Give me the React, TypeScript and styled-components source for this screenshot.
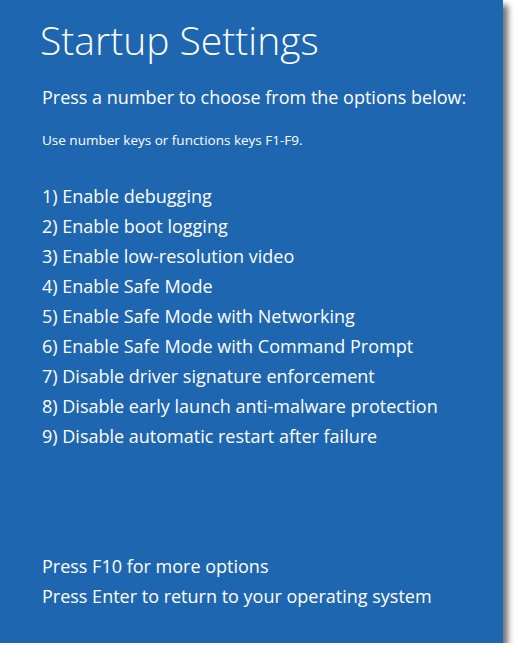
import React from "react";
import styled, { createGlobalStyle } from "styled-components";

const Global = createGlobalStyle`
  html, body { margin: 0; padding: 0; background: #ffffff; }
  body { font-family: "Open Sans", "Noto Sans", sans-serif; }
`;

const Screen = styled.div`
  width: 503px;
  height: 643px;
  background: #1f66b1;
  color: #ffffff;
  box-shadow: 5px 5px 6px rgba(0, 0, 0, 0.55);
  box-sizing: border-box;
  padding: 16px 0 0 40px;
  display: flex;
  flex-direction: column;
`;

const Title = styled.h1`
  margin: 0;
  font-weight: 300;
  font-size: 39px;
  line-height: 48px;
`;

const Prompt = styled.p`
  margin: 20px 0 0 2px;
  font-size: 18px;
  line-height: 26px;
  font-weight: 400;
`;

const Hint = styled.p`
  margin: 21px 0 0 2px;
  font-size: 13.5px;
  line-height: 18px;
`;

const OptionList = styled.ol`
  list-style: none;
  margin: 32px 0 0 2px;
  padding: 0;
  display: flex;
  flex-direction: column;
`;

const Option = styled.li`
  font-size: 18px;
  line-height: 30px;
`;

const Footer = styled.div`
  margin-top: auto;
  margin-bottom: 32px;
  margin-left: 2px;
  display: flex;
  flex-direction: column;
`;

const FooterLine = styled.div`
  font-size: 18px;
  line-height: 30px;
`;

const options = [
  "Enable debugging",
  "Enable boot logging",
  "Enable low-resolution video",
  "Enable Safe Mode",
  "Enable Safe Mode with Networking",
  "Enable Safe Mode with Command Prompt",
  "Disable driver signature enforcement",
  "Disable early launch anti-malware protection",
  "Disable automatic restart after failure",
];

export default function App() {
  return (
    <>
      <Global />
      <Screen>
        <Title>Startup Settings</Title>
        <Prompt>Press a number to choose from the options below:</Prompt>
        <Hint>Use number keys or functions keys F1-F9.</Hint>
        <OptionList>
          {options.map((o, i) => (
            <Option key={o}>
              {i + 1}) {o}
            </Option>
          ))}
        </OptionList>
        <Footer>
          <FooterLine>Press F10 for more options</FooterLine>
          <FooterLine>Press Enter to return to your operating system</FooterLine>
        </Footer>
      </Screen>
    </>
  );
}
